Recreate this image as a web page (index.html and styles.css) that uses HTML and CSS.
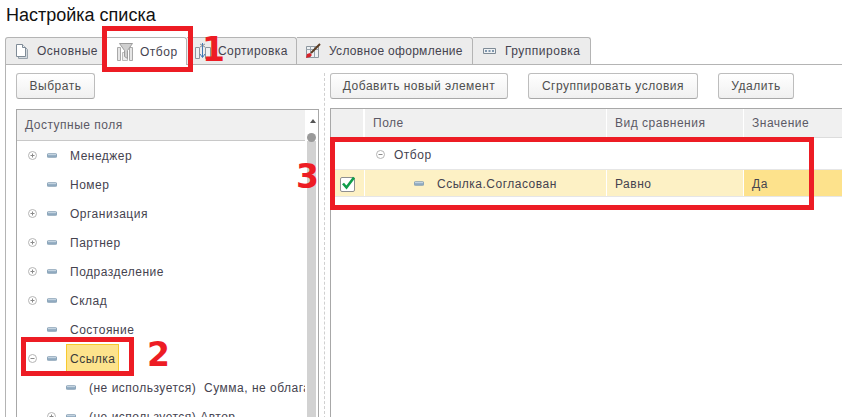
FILE: index.html
```html
<!DOCTYPE html>
<html lang="ru">
<head>
<meta charset="utf-8">
<title>Настройка списка</title>
<link rel="stylesheet" href="styles.css">
</head>
<body>
<svg class="defs" width="0" height="0" aria-hidden="true">
  <defs>
    <symbol id="dash" viewBox="0 0 10 5"><rect x="0" y="0.5" width="10" height="4" rx="1.5" fill="#8fa9bf" stroke="#7f98ad" stroke-width=".5"/><rect x="1" y="1" width="8" height="1.2" fill="#c3d3e0"/></symbol>
    <symbol id="plus" viewBox="0 0 9 9"><circle cx="4.5" cy="4.5" r="4" fill="#fff" stroke="#b5b5b5"/><path d="M2.5 4.5h4M4.5 2.5v4" stroke="#8a8a8a" fill="none"/></symbol>
    <symbol id="minus" viewBox="0 0 9 9"><circle cx="4.5" cy="4.5" r="4" fill="#fff" stroke="#b5b5b5"/><path d="M2.5 4.5h4" stroke="#8a8a8a" fill="none"/></symbol>
  </defs>
</svg>
<h1 class="title">Настройка списка</h1>
<nav class="tabs">
  <div class="tab tab-first">
    <svg class="ico" width="16" height="16" viewBox="0 0 16 16"><path d="M4.500 3.500h6l3 3v9h-9z" fill="#d5dbe0" stroke="#9aa4ad"/><path d="M2.500 1.500h6l3 3v9h-9z" fill="#fff" stroke="#7f8b96"/><path d="M8.500 1.500v3h3" fill="#e8edf1" stroke="#7f8b96"/></svg>
    <span>Основные</span>
  </div>
  <div class="tab tab-active">
    <svg class="ico" width="16" height="18" viewBox="0 0 16 18"><path d="M.5 4.500h3v13h-3zM12.500 4.500h3v13h-3z" fill="#e6e6e6" stroke="#a9a9a9"/><path d="M5.500 9.500h5v8h-5z" fill="#eee" stroke="#bbb"/><path d="M2.500.5h13l-5 7v8l-3-2v-6z" fill="#cfcfcf" stroke="#9c9c9c"/></svg>
    <span>Отбор</span>
  </div>
  <div class="tab tab-sort">
    <svg class="ico" width="16" height="18" viewBox="0 0 16 18"><path d="M.5 5.500h4v11h-4zM10.500 5.500h5v11h-5z" fill="#eef1f3" stroke="#8d979f"/><path d="M7.500 1v14M5 12l2.500 3.500L10 12" stroke="#3f79b5" fill="none"/><path d="M5 2l5 3M10 2L5 5" stroke="#6d7a86" fill="none" stroke-width=".8"/></svg>
    <span>Сортировка</span>
  </div>
  <div class="tab tab-cond">
    <svg class="ico" width="16" height="16" viewBox="0 0 16 16"><path d="M1.500 3.500h12v11h-12z" fill="#eef1f3" stroke="#8d979f"/><path d="M1.500 6.500h12M5.500 3.500v11M9.500 3.500v11" stroke="#9aa4ad" fill="none"/><path d="M15 1L6 10" stroke="#5a3b22" stroke-width="2" fill="none"/><path d="M1 15l1-4 3-1 2 2-2 2z" fill="#d8232a"/></svg>
    <span>Условное оформление</span>
  </div>
  <div class="tab tab-group">
    <svg class="ico" width="13" height="6" viewBox="0 0 13 6"><path d="M.5.500h12v5H.5z" fill="#eef1f3" stroke="#7f8b96"/><path d="M2 2h2v2H2zM5.500 2h2v2h-2zM9 2h2v2H9z" fill="#7f96ad"/></svg>
    <span>Группировка</span>
  </div>
</nav>
<main class="panel">
  <section class="left">
    <div class="btnrow"><button class="btn btn-select">Выбрать</button></div>
    <div class="fields">
      <div class="fields-main">
        <div class="fields-head">Доступные поля</div>
        <div class="row"><svg class="exp"><use href="#plus"/></svg><svg class="dash"><use href="#dash"/></svg><span>Менеджер</span></div>
        <div class="row"><span class="exp"></span><svg class="dash"><use href="#dash"/></svg><span>Номер</span></div>
        <div class="row"><svg class="exp"><use href="#plus"/></svg><svg class="dash"><use href="#dash"/></svg><span>Организация</span></div>
        <div class="row"><svg class="exp"><use href="#plus"/></svg><svg class="dash"><use href="#dash"/></svg><span>Партнер</span></div>
        <div class="row"><svg class="exp"><use href="#plus"/></svg><svg class="dash"><use href="#dash"/></svg><span>Подразделение</span></div>
        <div class="row"><svg class="exp"><use href="#plus"/></svg><svg class="dash"><use href="#dash"/></svg><span>Склад</span></div>
        <div class="row"><span class="exp"></span><svg class="dash"><use href="#dash"/></svg><span>Состояние</span></div>
        <div class="row"><svg class="exp"><use href="#minus"/></svg><svg class="dash"><use href="#dash"/></svg><span class="selected">Ссылка</span></div>
        <div class="row row-sub"><span class="exp"></span><svg class="dash"><use href="#dash"/></svg><span class="clip">(не используется)&nbsp; Сумма, не облагаемая</span></div>
        <div class="row row-sub"><svg class="exp"><use href="#plus"/></svg><svg class="dash"><use href="#dash"/></svg><span>(не используется) Автор</span></div>
      </div>
      <div class="scroll"><div class="scroll-up"></div><div class="scroll-thumb"></div></div>
    </div>
  </section>
  <div class="split"></div>
  <section class="right">
    <div class="btnrow">
      <button class="btn btn-add">Добавить новый элемент</button>
      <button class="btn btn-groupc">Сгруппировать условия</button>
      <button class="btn btn-del">Удалить</button>
    </div>
    <div class="table">
      <div class="tr th">
        <div class="c c-check"></div>
        <div class="c c-field">Поле</div>
        <div class="c c-cmp">Вид сравнения</div>
        <div class="c c-val">Значение</div>
      </div>
      <div class="tr tr-group">
        <div class="c c-check"></div>
        <div class="c c-field"><svg class="exp"><use href="#minus"/></svg><span>Отбор</span></div>
      </div>
      <div class="tr tr-sel">
        <div class="c c-check"><svg width="16" height="16" viewBox="0 0 16 16"><rect x=".5" y="1.500" width="14" height="14" rx="1.500" fill="#fff" stroke="#8f8f8f"/><path d="M3 7.500l3.500 4L14 1.500" stroke="#0f9d4a" stroke-width="2.600" fill="none"/></svg></div>
        <div class="c c-field"><svg class="dash"><use href="#dash"/></svg><span>Ссылка.Согласован</span></div>
        <div class="c c-cmp">Равно</div>
        <div class="c c-val">Да</div>
      </div>
    </div>
  </section>
</main>
<div class="mark mark-1"></div>
<div class="mark mark-2"></div>
<div class="mark mark-3"></div>
<div class="num num-1">1</div>
<div class="num num-2">2</div>
<div class="num num-3">3</div>
</body>
</html>
```
FILE: styles.css
```css
* { box-sizing: border-box; }
html, body { margin: 0; height: 417px; overflow: hidden; }
body {
  position: relative;
  width: 842px;
  background: #fff;
  font-family: "Liberation Sans", Arial, sans-serif;
  font-size: 12px;
  letter-spacing: .5px;
  color: #45434f;
  padding: 5px 0 0 5px;
}
.defs { position: absolute; }
.title {
  margin: 0 0 0 1px;
  height: 32px;
  font-size: 18px;
  line-height: 21px;
  font-weight: 400;
  letter-spacing: 0;
  color: #111;
}
.tabs { display: flex; height: 27px; }
.tab {
  display: flex;
  align-items: center;
  border: 1px solid #b4b4b4;
  border-bottom: 0;
  border-left: 0;
  border-radius: 0 3px 0 0;
  background: #ececec;
  position: relative;
}
.tab-first { width: 102px; padding-left: 8px; gap: 7px; border-left: 1px solid #b4b4b4; border-radius: 3px 3px 0 0; }
.tab-active { width: 80px; padding-left: 10px; gap: 7px; background: #fff; height: 28px; z-index: 1; }
.tab-sort { width: 110px; padding-left: 8px; gap: 7px; letter-spacing: .4px; }
.tab-cond { width: 176px; padding-left: 8px; gap: 8px; letter-spacing: .3px; }
.tab-group { width: 118px; padding-left: 10px; gap: 9px; }
.ico { flex: none; }
.panel {
  display: flex;
  height: 353px;
  border-top: 1px solid #b4b4b4;
  border-left: 1px solid #b4b4b4;
  padding: 8px 0 0 10px;
}
.left { width: 303px; flex: none; }
.btnrow { display: flex; height: 26px; }
.btn {
  height: 26px;
  padding: 0;
  border: 1px solid #bdbdbd;
  border-bottom-color: #a8a8a8;
  border-radius: 3px;
  background: linear-gradient(#ffffff, #f0f0f0);
  font: inherit;
  letter-spacing: inherit;
  color: #4f4f4f;
}
.btn-select { width: 79px; }
.btn-add { width: 178px; }
.btn-groupc { width: 170px; margin-left: 20px; }
.btn-del { width: 76px; margin-left: 20px; }
.fields {
  display: flex;
  height: 320px;
  margin-top: 10px;
  border: 1px solid #a8a8a8;
  border-bottom: 0;
}
.fields-main { width: 288px; flex: none; overflow: hidden; }
.fields-head {
  height: 31px;
  line-height: 30px;
  padding-left: 8px;
  background: #f0f0f0;
  border-bottom: 1px solid #c8c8c8;
  color: #5b5965;
}
.row { display: flex; align-items: center; height: 29px; padding-left: 11px; white-space: nowrap; }
.row-sub { padding-left: 30px; }
.exp { flex: none; width: 9px; height: 9px; }
.dash { flex: none; width: 10px; height: 5px; margin-left: 10px; margin-right: 13px; }
.selected {
  display: flex;
  align-items: center;
  height: 28px;
  margin-bottom: 1px;
  margin-left: -4px;
  padding: 2px 3px 0;
  background: #fde38c;
  border: 1px solid #f7c92e;
  color: #3a3a3a;
}
.scroll { flex: 1; position: relative; background: #d2d2d2; margin-top: 31px; margin-left: 2px; margin-right: 2px; }
.scroll-up {
  position: absolute;
  top: -22px;
  left: 3px;
  border: 3px solid transparent;
  border-top: 0;
  border-bottom: 4px solid #555;
}
.scroll-thumb { position: absolute; top: -8px; left: 0; width: 100%; height: 9px; border-radius: 5px; background: #9a9a9a; }
.split { width: 0; height: 346px; margin-left: 5px; margin-right: 5px; border-left: 1px dashed #d0d0d0; }
.right { flex: 1; min-width: 0; }
.table { margin-top: 9px; border-top: 1px solid #a8a8a8; border-left: 1px solid #a8a8a8; height: 310px; width: 513px; }
.tr { display: flex; }
.th { height: 29px; background: #f0f0f0; border-bottom: 1px solid #dcdcdc; }
.tr-group { height: 32px; padding-top: 2px; border-bottom: 1px solid #e6e6e6; }
.tr-sel { height: 27px; border-bottom: 1px solid #e6e6e6; }
.c { display: flex; align-items: center; flex: none; padding-left: 8px; border-right: 1px solid #fff; white-space: nowrap; }
.c-check { width: 34px; padding-left: 9px; border-right-color: #dcdcdc; }
.c-field { width: 242px; }
.c-cmp { width: 137px; }
.c-val { width: 99px; border-right: 0; }
.th .c { color: #5b5965; }
.th .c-check { border-right: 2px solid #fff; }
.tr-group .c-check { border-right: 0; }
.tr-group .c-field { padding-left: 11px; }
.tr-group .exp { margin-right: 9px; }
.tr-sel .c { background: #fdf1c5; padding-top: 1px; }
.tr-sel .c-check { border-right: 1px solid #fff; }
.tr-sel .c-field .dash { margin-left: 41px; margin-right: 13px; }
.tr-sel .c-val { background: #fde28c; }
.mark { position: absolute; border: 5px solid #ed1c24; z-index: 5; }
.mark-1 { left: 102px; top: 26px; width: 91px; height: 46px; }
.mark-2 { left: 21px; top: 337px; width: 113px; height: 39px; }
.mark-3 { left: 330px; top: 137px; width: 484px; height: 73px; }
.num {
  position: absolute;
  z-index: 6;
  font-family: "DejaVu Sans", sans-serif;
  font-weight: 700;
  font-size: 33px;
  line-height: 38px;
  letter-spacing: 0;
  color: #ed1c24;
}
.num-1 { left: 202px; top: 31px; }
.num-2 { left: 147px; top: 336px; }
.num-3 { left: 296px; top: 158px; }
```
